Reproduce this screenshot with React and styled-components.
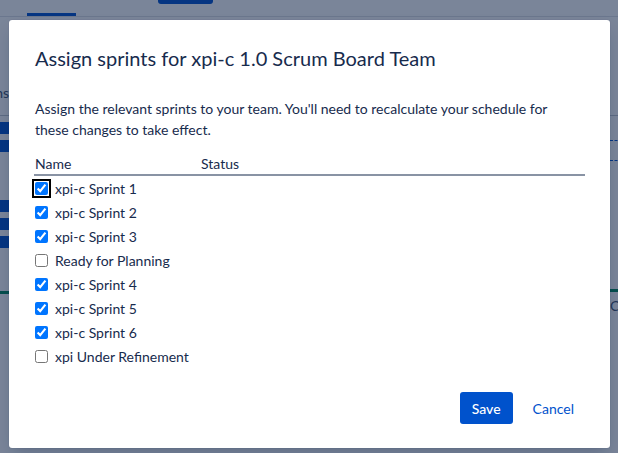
import styled, { createGlobalStyle } from "styled-components";

const GlobalStyle = createGlobalStyle`
  html, body {
    margin: 0;
    padding: 0;
  }
  body {
    font-family: Lato, "Noto Sans", sans-serif;
    color: #172b4d;
  }
`;

const Page = styled.div`
  position: relative;
  width: 618px;
  height: 453px;
  overflow: hidden;
  background: #fff;
`;

const TopBar = styled.div`
  height: 16px;
  border-bottom: 1px solid #dfe1e6;
  display: flex;
  align-items: flex-end;
  padding-left: 27px;
  gap: 82px;
`;

const NavTab = styled.div`
  width: 49px;
  height: 3px;
  background: #0052cc;
`;

const NavButton = styled.div`
  align-self: flex-start;
  width: 55px;
  height: 4px;
  border-radius: 0 0 3px 3px;
  background: #0052cc;
`;

const Backdrop = styled.div`
  display: flex;
  justify-content: space-between;
  padding-top: 62px;
`;

const SideColumn = styled.div`
  width: ${(p) => (p.$right ? 8 : 9)}px;
  overflow: hidden;
  display: flex;
  flex-direction: column;
  align-items: ${(p) => (p.$right ? "flex-start" : "flex-end")};
`;

const SideText = styled.div`
  font-size: 14px;
  height: 28px;
  line-height: 28px;
  margin-bottom: ${(p) => p.$gap || 0}px;
  white-space: nowrap;
  color: #42526e;
`;

const SideRule = styled.div`
  width: 100%;
  height: 1px;
  background: #c1c7d0;
  margin-bottom: 6px;
`;

const Chip = styled.div`
  width: 9px;
  height: 12px;
  margin-bottom: 6px;
  margin-top: ${(p) => p.$top || 0}px;
  background: #0052cc;
`;

const Dashed = styled.div`
  width: 12px;
  border-top: 1px dashed #0052cc;
  margin-top: ${(p) => p.$top || 0}px;
`;

const GreenLine = styled.div`
  width: 12px;
  height: 3px;
  background: #00875a;
  margin-top: ${(p) => p.$top || 0}px;
`;

const Blanket = styled.div`
  position: absolute;
  inset: 0;
  background: rgba(9, 30, 66, 0.54);
`;

const Dialog = styled.div`
  position: absolute;
  left: 9px;
  top: 20px;
  width: 601px;
  height: 428px;
  box-sizing: border-box;
  background: #fff;
  border-radius: 3px;
  box-shadow: 0 0 1px rgba(9, 30, 66, 0.31), 0 8px 16px -4px rgba(9, 30, 66, 0.25);
  padding: 24px 24px 24px 26px;
  display: flex;
  flex-direction: column;
`;

const Title = styled.h1`
  margin: 0;
  font-size: 20px;
  line-height: 28px;
  font-weight: 400;
  color: #172b4d;
`;

const Description = styled.p`
  margin: 26px 0 0;
  max-width: 545px;
  font-size: 14px;
  line-height: 21px;
  color: #172b4d;
`;

const Table = styled.div`
  margin-top: 14px;
  width: 551px;
  margin-left: -1px;
`;

const HeaderRow = styled.div`
  display: grid;
  grid-template-columns: 166px 1fr;
  padding-left: 1px;
  border-bottom: 2px solid #8993a4;
  font-size: 14px;
  line-height: 20px;
  color: #172b4d;
`;

const Row = styled.label`
  display: flex;
  align-items: center;
  gap: 7px;
  height: 24px;
  padding-left: 1px;
  font-size: 14px;
  color: #172b4d;
`;

const Check = styled.input`
  margin: 0;
  width: 13px;
  height: 13px;
  accent-color: #0075ff;
  outline: ${(p) => (p.$focused ? "2px solid #000" : "none")};
  outline-offset: 1px;
  border-radius: 2px;
`;

const Footer = styled.div`
  margin-top: auto;
  display: flex;
  justify-content: flex-end;
  align-items: center;
  gap: 8px;
`;

const SaveButton = styled.button`
  height: 32px;
  padding: 0 12px;
  border: none;
  border-radius: 3px;
  background: #0052cc;
  color: #fff;
  font-family: inherit;
  font-size: 14px;
  font-weight: 500;
`;

const CancelButton = styled.button`
  height: 32px;
  padding: 0 12px;
  border: none;
  background: transparent;
  color: #0052cc;
  font-family: inherit;
  font-size: 14px;
`;

const sprints = [
  { name: "xpi-c Sprint 1", checked: true, focused: true },
  { name: "xpi-c Sprint 2", checked: true },
  { name: "xpi-c Sprint 3", checked: true },
  { name: "Ready for Planning", checked: false },
  { name: "xpi-c Sprint 4", checked: true },
  { name: "xpi-c Sprint 5", checked: true },
  { name: "xpi-c Sprint 6", checked: true },
  { name: "xpi Under Refinement", checked: false },
];

export default function App() {
  return (
    <Page>
      <GlobalStyle />
      <TopBar>
        <NavTab />
        <NavButton />
      </TopBar>
      <Backdrop>
        <SideColumn>
          <SideText $gap={8}>ns</SideText>
          <SideRule />
          <Chip />
          <Chip />
          <Chip $top={42} />
          <Chip />
          <Chip />
          <GreenLine $top={37} />
        </SideColumn>
        <SideColumn $right>
          <SideText $gap={8} />
          <SideRule />
          <Dashed $top={18} />
          <Dashed $top={19} />
          <GreenLine $top={128} />
          <SideText>Cl</SideText>
        </SideColumn>
      </Backdrop>
      <Blanket />
      <Dialog>
        <Title>Assign sprints for xpi-c 1.0 Scrum Board Team</Title>
        <Description>
          Assign the relevant sprints to your team. You'll need to recalculate your schedule for
          these changes to take effect.
        </Description>
        <Table>
          <HeaderRow>
            <span>Name</span>
            <span>Status</span>
          </HeaderRow>
          {sprints.map((s) => (
            <Row key={s.name}>
              <Check type="checkbox" defaultChecked={s.checked} $focused={s.focused} />
              {s.name}
            </Row>
          ))}
        </Table>
        <Footer>
          <SaveButton>Save</SaveButton>
          <CancelButton>Cancel</CancelButton>
        </Footer>
      </Dialog>
    </Page>
  );
}
